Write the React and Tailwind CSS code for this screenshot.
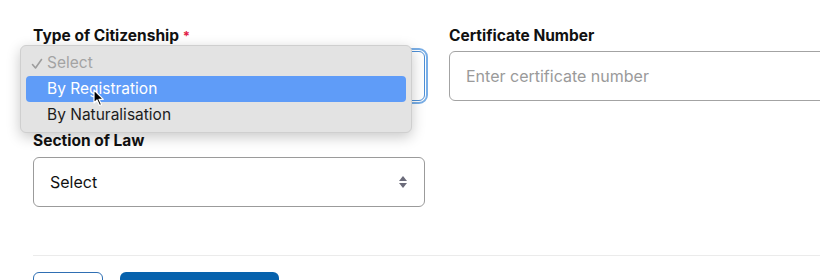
import React from 'react';

const font = { fontFamily: 'Inter, "Noto Sans", sans-serif' };

function Cursor() {
  return (
    <svg width="12" height="18" viewBox="0 0 12 18" className="absolute left-[93px] top-[89px]">
      <path d="M1 1 L1 14 L4 11 L6.5 16.5 L8.5 15.6 L6 10.3 L10.3 10.3 Z" fill="#000" stroke="#fff" strokeWidth="1.2" strokeLinejoin="round" />
    </svg>
  );
}

function Chevrons() {
  return (
    <svg width="10" height="16" viewBox="0 0 10 16">
      <path d="M5 2 L9 7 L1 7 Z" fill="#6b6b7a" />
      <path d="M5 14 L9 9 L1 9 Z" fill="#6b6b7a" />
    </svg>
  );
}

function Check() {
  return (
    <svg width="12" height="12" viewBox="0 0 12 12" className="absolute left-[5px] top-[8px]">
      <path d="M1.5 6.5 L4.5 10 L10.5 1.5" fill="none" stroke="#9d9d9d" strokeWidth="1.6" strokeLinecap="round" strokeLinejoin="round" />
    </svg>
  );
}

export default function App() {
  return (
    <div className="relative w-[820px] h-[280px] overflow-hidden bg-white text-[#111]" style={font}>
      <div className="pl-[33px] pt-[26px]">
        <div className="grid grid-cols-[392px_1fr] gap-x-6">
          {/* left column */}
          <div>
            <label className="block h-5 leading-5 text-[15.5px] font-bold mb-[5px]">
              Type of Citizenship <span className="text-[#e11d48] text-[13px] align-top">*</span>
            </label>
            <div className="h-[50px] rounded-md border border-[#4d8fd6] outline-2 outline-offset-1 outline-[#79aee6] bg-white" />

            <label className="block h-5 leading-5 text-[15.5px] font-bold mt-[30px] mb-[6px]">Section of Law</label>
            <div className="h-[50px] rounded-md border border-[#9b9b9b] flex items-center justify-between pl-4 pr-4">
              <span className="text-[16px]">Select</span>
              <Chevrons />
            </div>
          </div>

          {/* right column */}
          <div>
            <label className="block h-5 leading-5 text-[15.5px] font-bold mb-[5px]">Certificate Number</label>
            <div className="h-[50px] w-[420px] rounded-md border border-[#a3a3a3] flex items-center pl-4">
              <span className="text-[16px] text-[#9a9a9a]">Enter certificate number</span>
            </div>
          </div>
        </div>

        <div className="mt-[48px] border-t border-[#ebebeb]" />

        <div className="flex gap-[17px] mt-4">
          <button className="w-[70px] h-10 rounded-md border border-[#2f6fb3] bg-white" />
          <button className="w-[159px] h-10 rounded-md bg-[#0762ad]" />
        </div>
      </div>

      {/* open native dropdown */}
      <div className="absolute left-[20px] top-[45px] w-[392px] h-[88px] rounded-md bg-[#e3e3e3] border border-[#cfcfcf] shadow-[0_4px_14px_rgba(0,0,0,0.22)] px-[5px] py-[4px] text-[15.5px]">
        <div className="relative h-[26px] flex items-center pl-[21px] text-[#a3a3a3]">
          <Check />
          Select
        </div>
        <div className="h-[26px] flex items-center pl-[21px] rounded bg-[#5f9cf8] text-white">By Registration</div>
        <div className="h-[26px] flex items-center pl-[21px] text-[#1c1c1c]">By Naturalisation</div>
      </div>

      <Cursor />
    </div>
  );
}
